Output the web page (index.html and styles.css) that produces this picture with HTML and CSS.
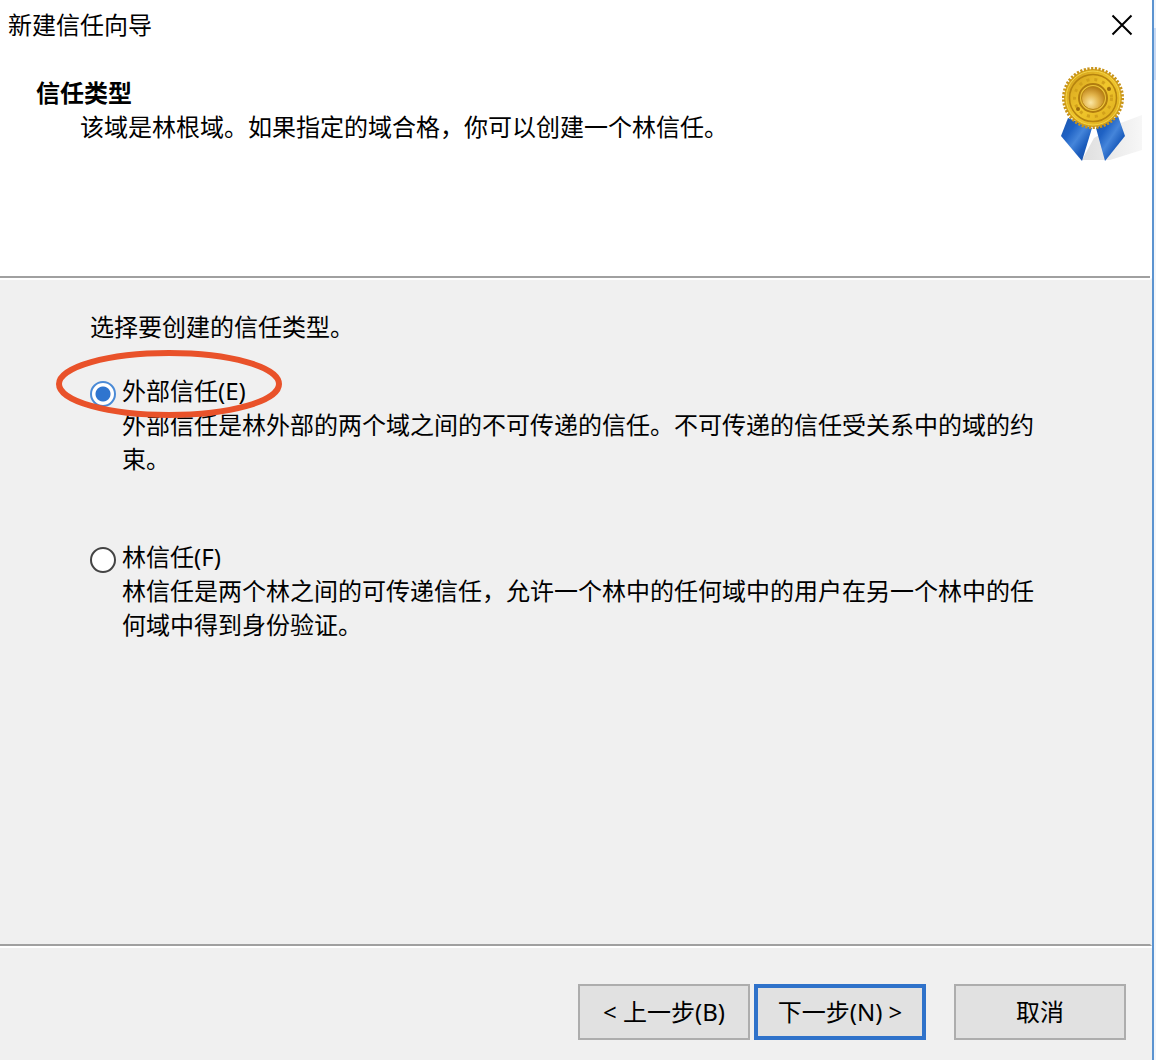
FILE: index.html
```
<!DOCTYPE html>
<html lang="zh-CN">

<head>
  <meta charset="UTF-8">
  <meta name="viewport" content="width=device-width, initial-scale=1.0">
  <title>新建信任向导</title>
  <link rel="stylesheet" href="styles.css">
</head>

<body>
  <form class="wizard">
    <div class="title-bar">
      <span class="title">新建信任向导</span>
      <button type="button" class="close" aria-label="关闭">
        <svg width="22" height="22" viewBox="0 0 22 22">
          <path d="M1.500 1.500L20.500 20.500M20.500 1.500L1.500 20.500" stroke="#000" stroke-width="2" fill="none" />
        </svg>
      </button>
    </div>

    <header class="wizard-header">
      <div class="heading">
        <h1>信任类型</h1>
        <p>该域是林根域。如果指定的域合格，你可以创建一个林信任。</p>
      </div>
      <svg class="medal" width="84" height="98" viewBox="0 0 84 98">
        <defs>
          <linearGradient id="ribbon" x1="0" y1="0" x2="1" y2="1">
            <stop offset="0" stop-color="#1b55aa" />
            <stop offset="0.3" stop-color="#1f62c4" />
            <stop offset="0.5" stop-color="#4585da" />
            <stop offset="0.7" stop-color="#1c5dbd" />
            <stop offset="1" stop-color="#12489c" />
          </linearGradient>
          <linearGradient id="shade" x1="0" y1="0" x2="1" y2="0">
            <stop offset="0" stop-color="#c4c4c4" />
            <stop offset="1" stop-color="#f0f0f0" />
          </linearGradient>
          <linearGradient id="gold" x1="0" y1="0" x2="1" y2="1">
            <stop offset="0" stop-color="#d09c1a" />
            <stop offset="0.5" stop-color="#f0c62c" />
            <stop offset="1" stop-color="#dcab1c" />
          </linearGradient>
          <radialGradient id="core" cx="0.4" cy="0.7" r="0.7">
            <stop offset="0" stop-color="#fbe7a4" />
            <stop offset="0.5" stop-color="#e3b54c" />
            <stop offset="1" stop-color="#b57a12" />
          </radialGradient>
        </defs>
        <!-- shadow -->
        <path d="M58 58L82 49V84L50 94L22 94L34 72Z" fill="url(#shade)" opacity="0.55" />
        <!-- ribbons -->
        <path d="M8 52L32 62L22 95L1 70Z" fill="url(#ribbon)" />
        <path d="M36 62L58 50L65 70L45 95Z" fill="url(#ribbon)" />
        <!-- disc -->
        <circle cx="33" cy="32" r="29" fill="#d8a71c" />
        <circle cx="33" cy="32" r="29.500" fill="none" stroke="#c8941a" stroke-width="3" stroke-dasharray="2.200 1.500" />
        <circle cx="33" cy="32" r="27" fill="url(#gold)" stroke="#f3d348" stroke-width="1" />
        <circle cx="33" cy="32" r="23.500" fill="none" stroke="#b5830f" stroke-width="1.500" />
        <circle cx="33" cy="32" r="18.500" fill="none" stroke="#d2a11b" stroke-width="3" stroke-dasharray="3 5" />
        <circle cx="33" cy="32" r="14" fill="#edc539" stroke="#b07c10" stroke-width="2" />
        <circle cx="33" cy="32" r="11.500" fill="url(#core)" stroke="#b88414" stroke-width="1" />
        <circle cx="49" cy="23" r="2" fill="#9c6c0d" />
        <circle cx="18" cy="43" r="2" fill="#9c6c0d" />
      </svg>
    </header>

    <main class="wizard-body">
      <p class="prompt">选择要创建的信任类型。</p>

      <div class="option">
        <input type="radio" name="trust" id="external" checked>
        <label for="external">外部信任(E)</label>
        <p class="desc">外部信任是林外部的两个域之间的不可传递的信任。不可传递的信任受关系中的域的约束。</p>
        <svg class="highlight" width="226" height="68" viewBox="0 0 226 68">
          <ellipse cx="113" cy="34" rx="110" ry="31" fill="none" stroke="#e9522a" stroke-width="6" />
        </svg>
      </div>

      <div class="option">
        <input type="radio" name="trust" id="forest">
        <label for="forest">林信任(F)</label>
        <p class="desc">林信任是两个林之间的可传递信任，允许一个林中的任何域中的用户在另一个林中的任何域中得到身份验证。</p>
      </div>
    </main>

    <footer class="wizard-footer">
      <button type="button" class="btn">&lt; 上一步(B)</button>
      <button type="button" class="btn btn-default">下一步(N) &gt;</button>
      <button type="button" class="btn btn-cancel">取消</button>
    </footer>
  </form>
  <div class="behind"></div>
</body>

</html>
```
FILE: styles.css
```
* {
  box-sizing: border-box;
}

body {
  margin: 0;
  display: flex;
  min-height: 100vh;
  color: #000;
  font: 24px/34px "Noto Sans", "Noto Sans CJK SC", sans-serif;
}

h1,
p {
  margin: 0;
  font-size: 24px;
}

.wizard {
  flex: 1;
  display: flex;
  flex-direction: column;
  background: #fff;
  border-right: 2px solid #5b93d0;
}

.title-bar {
  display: flex;
  justify-content: space-between;
  align-items: center;
  height: 50px;
  padding: 0 19px 0 8px;
}

.close {
  display: flex;
  padding: 0;
  border: none;
  background: none;
}

/* the separator stops just short of the window edge */
.wizard-header {
  display: flex;
  justify-content: space-between;
  height: 228px;
  margin-right: 2px;
  padding: 16px 6px 0 36px;
  border-bottom: 2px solid #a0a0a0;
}

.heading {
  padding-top: 10px;
}

.heading p {
  padding-left: 44px;
}

.wizard-body {
  flex: 1;
  padding: 30px 100px 0 90px;
  border-top: 2px solid #fff;
  border-right: 2px solid #f0f0f0;
  border-bottom: 2px solid #a0a0a0;
  background: #f0f0f0;
}

.prompt {
  margin-bottom: 30px;
}

.option {
  position: relative;
  display: grid;
  grid-template-columns: 26px 1fr;
  column-gap: 6px;
  align-items: center;
  margin-bottom: 64px;
}

.option input {
  appearance: none;
  width: 26px;
  height: 26px;
  margin: 6px 0 0;
  border: 2px solid #444;
  border-radius: 50%;
  background: #fff;
}

.option input:checked {
  border-color: #4a8ad6;
  background: radial-gradient(circle, #2f75cf 7px, #fff 8px);
}

.desc {
  grid-column: 2;
}

.highlight {
  position: absolute;
  top: -24px;
  left: -34px;
  pointer-events: none;
}

.wizard-footer {
  display: flex;
  justify-content: flex-end;
  gap: 4px;
  padding: 36px 26px 20px;
  border-top: 2px solid #fff;
  background: #f0f0f0;
}

.btn {
  width: 172px;
  height: 56px;
  padding: 0;
  border: 2px solid #adadad;
  background: #e1e1e1;
  color: #000;
  font: inherit;
}

.btn-default {
  border: 4px solid #2f72ca;
}

.btn-cancel {
  margin-left: 24px;
}

.behind {
  width: 2px;
  background: linear-gradient(#f3f6fa 28px, #c9daf3 28px, #c9daf3 80px, #f3f6fa 80px);
}
```
